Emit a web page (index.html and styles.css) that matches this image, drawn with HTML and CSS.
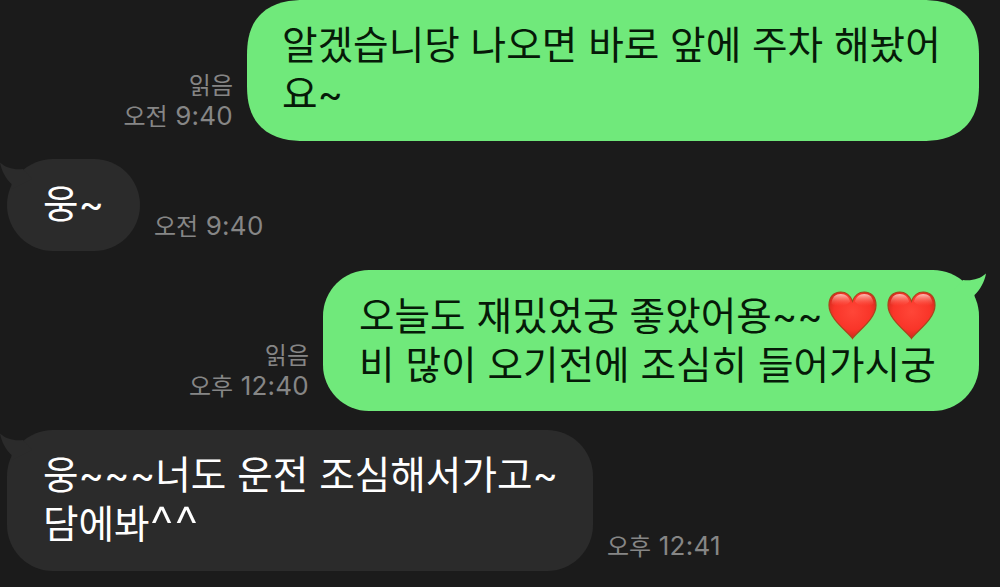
FILE: index.html
```html
<!DOCTYPE html>
<html lang="ko">
<head>
  <meta charset="UTF-8">
  <meta name="viewport" content="width=device-width, initial-scale=1.0">
  <title>Messages</title>
  <link rel="stylesheet" href="styles.css">
</head>
<body>

  <!-- Heart artwork -->
  <svg class="defs" width="0" height="0">
    <defs>
      <radialGradient id="heartFill" cx="0.5" cy="0.42" r="0.6">
        <stop offset="0" stop-color="#ff4638"/>
        <stop offset="0.65" stop-color="#f93529"/>
        <stop offset="1" stop-color="#c9281a"/>
      </radialGradient>
      <linearGradient id="heartShine" x1="0" y1="0" x2="0" y2="1">
        <stop offset="0" stop-color="#ffd2c8" stop-opacity="0.9"/>
        <stop offset="1" stop-color="#ff5a4a" stop-opacity="0"/>
      </linearGradient>
      <symbol id="heart" viewBox="0 0 50 50">
        <path d="M25 48.500C21 42 1 29 1 14.500C1 6 6 1 13 1C19 1 23 5 25 10.500C27 5 31 1 37 1C44 1 49 6 49 14.500C49 29 29 42 25 48.500Z" fill="url(#heartFill)" stroke="#a8471c" stroke-width="1.2"/>
        <path d="M3.500 13C4 6 8 3 13 3C18 3 21.500 6 22.500 11C18 16 8 17 3.500 13Z" fill="url(#heartShine)"/>
        <path d="M46.500 13C46 6 42 3 37 3C32 3 28.500 6 27.500 11C32 16 42 17 46.500 13Z" fill="url(#heartShine)"/>
      </symbol>
      <symbol id="tail" viewBox="0 0 32 30">
        <path d="M0 3.500C6 9 14 11 23 10L32 20L12 30L11.500 25C6 20 1.500 12 0 3.500Z"/>
      </symbol>
    </defs>
  </svg>

  <!-- Conversation -->
  <div class="chat">
    <div class="row sent">
      <div class="meta">읽음<br>오전<span class="time"> 9:40</span></div>
      <div class="bubble smooth">알겠습니당 나오면 바로 앞에 주차 해놨어<br>요~</div>
    </div>

    <div class="row received">
      <div class="bubble short">
        <svg class="tail"><use href="#tail"/></svg>
        웅~
      </div>
      <div class="meta">오전<span class="time"> 9:40</span></div>
    </div>

    <div class="row sent">
      <div class="meta">읽음<br>오후<span class="time"> 12:40</span></div>
      <div class="bubble">
        <svg class="tail"><use href="#tail"/></svg>
        오늘도 재밌었궁 좋았어용~~<span class="hearts"><svg class="heart"><use href="#heart"/></svg><svg class="heart"><use href="#heart"/></svg></span><br>비 많이 오기전에 조심히 들어가시궁
      </div>
    </div>

    <div class="row received">
      <div class="bubble">
        <svg class="tail"><use href="#tail"/></svg>
        웅~~~너도 운전 조심해서가고~<br>담에봐<span class="caret">^^</span>
      </div>
      <div class="meta">오후<span class="time"> 12:41</span></div>
    </div>
  </div>

</body>
</html>
```
FILE: styles.css
```css
* {
  margin: 0;
  padding: 0;
  box-sizing: border-box;
}

body {
  background: #1b1b1b;
  font-family: Inter, "Noto Sans CJK KR", sans-serif;
  height: 587px;
  overflow: hidden;
}

.defs {
  position: absolute;
}

/* Rows */
.chat {
  display: flex;
  flex-direction: column;
  gap: 19px;
  padding: 0 21px 0 7px;
}

.row {
  display: flex;
  align-items: flex-end;
  gap: 14px;
}

.row:nth-child(2) {
  margin-top: -1px;
}

.sent {
  justify-content: flex-end;
}

/* Bubbles */
.bubble {
  position: relative;
  height: 141px;
  padding: 21px 35px 0 36px;
  border-radius: 46px;
  font-size: 38.65px;
  line-height: 49px;
  white-space: nowrap;
}

.sent .bubble {
  width: 656px;
  background: #70e97b;
  color: #061a08;
}

.received .bubble {
  width: 586px;
  background: #2b2b2b;
  color: #fff;
}

.sent .bubble.smooth {
  width: 732px;
  padding-left: 35px;
  border-radius: 58px / 56px;
  corner-shape: superellipse(1.3);
}

.received .bubble.short {
  width: 133px;
  height: 92px;
}

.tail {
  position: absolute;
  top: 0;
  left: -7px;
  width: 32px;
  height: 30px;
  fill: #2b2b2b;
}

.sent .tail {
  left: auto;
  right: -7px;
  fill: #70e97b;
  transform: scaleX(-1);
}

/* Read status and time */
.meta {
  color: #868686;
  font-size: 24px;
  line-height: 31px;
  text-align: right;
  white-space: nowrap;
  padding-bottom: 9px;
}

.time {
  font-size: 26px;
  line-height: 1;
  letter-spacing: 0.25px;
}

.caret {
  font-size: 53px;
  font-weight: 300;
  line-height: 0;
  letter-spacing: 1px;
  vertical-align: -6px;
}

/* Hearts */
.hearts {
  display: inline-flex;
  gap: 10px;
  margin-left: 5px;
  vertical-align: -10px;
  height: 49px;
}

.heart {
  width: 49px;
  height: 49px;
}
```
